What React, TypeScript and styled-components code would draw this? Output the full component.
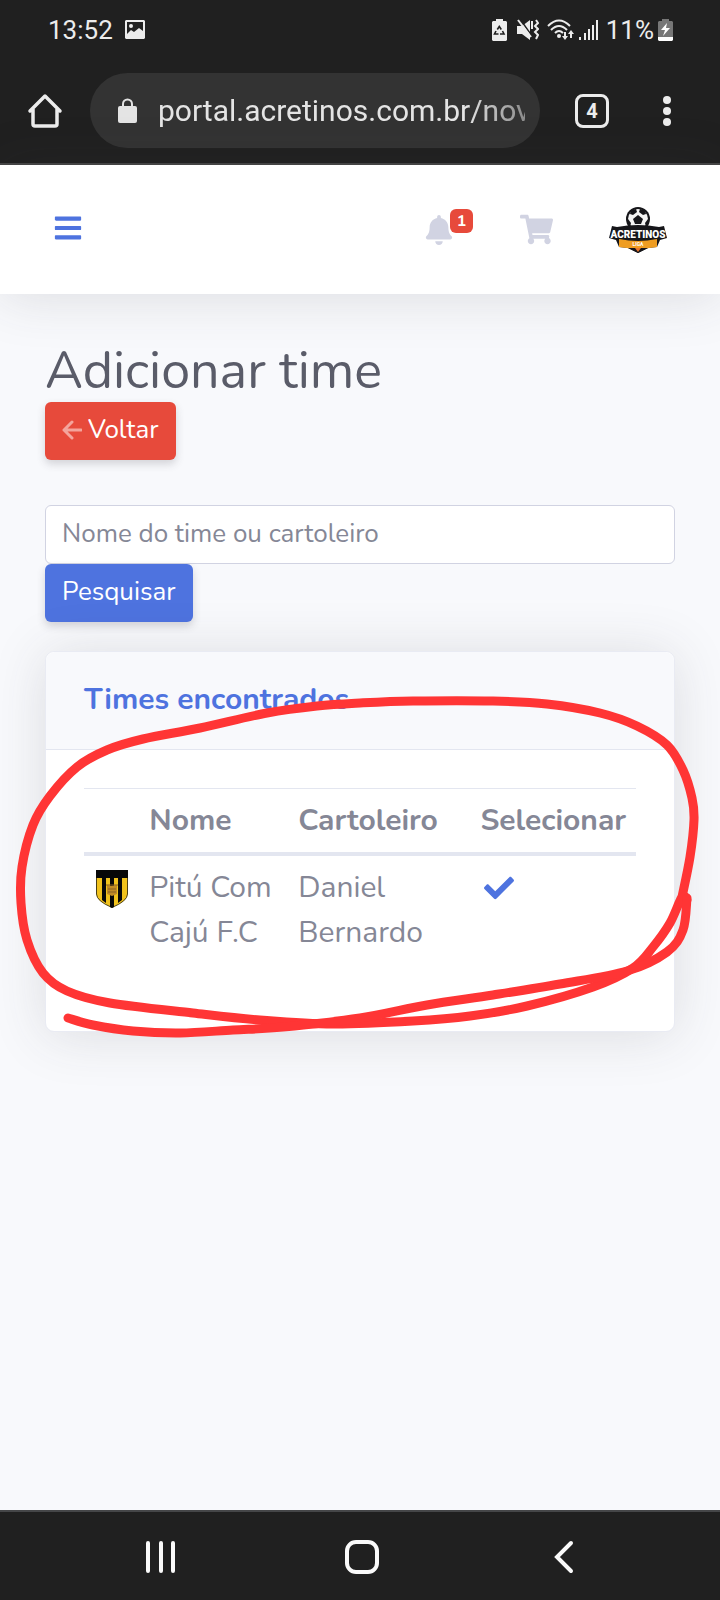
import React from "react";
import styled, { createGlobalStyle } from "styled-components";
import { FaBars, FaBell, FaCheck, FaShoppingCart } from "react-icons/fa";

const GlobalStyle = createGlobalStyle`
  *, *::before, *::after { box-sizing: border-box; }
  body { margin: 0; background: #f8f9fc; }
  button, input { font: inherit; }
  button { cursor: pointer; }
`;

const Screen = styled.div`
  display: flex;
  flex-direction: column;
  min-height: 100vh;
  font-family: "Nunito", "Open Sans", sans-serif;
  color: #858796;
  background: #f8f9fc;
`;

const BrowserChrome = styled.header`
  background: #202020;
  color: #ececec;
  border-bottom: 2px solid #454545;
  font-family: Roboto, sans-serif;
`;

const StatusBar = styled.div`
  display: flex;
  align-items: center;
  justify-content: space-between;
  height: 60px;
  padding: 0 47px 0 48px;
  font-size: 26px;
`;

const StatusGroup = styled.div<{ $gap: number }>`
  display: flex;
  align-items: center;
  gap: ${(p) => p.$gap}px;
`;

const AddressRow = styled.div`
  display: flex;
  align-items: center;
  height: 103px;
  padding: 0 18px 2px 25px;
`;

const ChromeButton = styled.button<{ $width: number }>`
  display: flex;
  align-items: center;
  justify-content: center;
  width: ${(p) => p.$width}px;
  height: 48px;
  padding: 0;
  border: 0;
  background: none;
  color: inherit;
`;

const AddressPill = styled.label`
  display: flex;
  align-items: center;
  flex: 1;
  min-width: 0;
  height: 75px;
  margin: 0 12px 0 25px;
  padding: 0 15px 0 28px;
  gap: 21px;
  border-radius: 38px;
  background: #333333;
`;

const AddressInput = styled.input`
  flex: 1;
  min-width: 0;
  height: 44px;
  padding: 0;
  border: 0;
  outline: 0;
  background: none;
  color: #e4e4e4;
  font-size: 30px;
  mask-image: linear-gradient(to right, #000 84%, rgba(0, 0, 0, 0.5));
`;

const Topbar = styled.nav`
  display: flex;
  align-items: center;
  height: 129px;
  padding: 0 53px 4px;
  background: #fff;
  box-shadow: 0 3px 54px rgba(58, 59, 69, 0.15);
`;

const IconButton = styled.button<{ $tone: string; $after?: number }>`
  display: flex;
  position: relative;
  margin-right: ${(p) => p.$after ?? 0}px;
  padding: 0;
  border: 0;
  background: none;
  color: ${(p) => p.$tone};
`;

const TopbarActions = styled.div`
  display: flex;
  align-items: center;
  margin-left: auto;
  padding-top: 4px;
`;

const Counter = styled.span`
  position: absolute;
  top: -6px;
  left: 26px;
  width: 23px;
  border-radius: 6px;
  background: #e74a3b;
  color: #fff;
  font-size: 16px;
  font-weight: 700;
  line-height: 24px;
  text-align: center;
`;

const Content = styled.main`
  display: flex;
  flex-direction: column;
  align-items: flex-start;
  flex: 1;
  padding: 45px 45px 0;
`;

const Title = styled.h1`
  margin: 0;
  color: #5a5c69;
  font-size: 52px;
  font-weight: 400;
  line-height: 63px;
`;

const ActionButton = styled.button<{ $color: string }>`
  display: flex;
  align-items: center;
  gap: 6px;
  height: 58px;
  padding: 0 17px 2px;
  border: 0;
  border-radius: 6px;
  background: ${(p) => p.$color};
  color: #fff;
  font-size: 26px;
  line-height: 38px;
  box-shadow: 0 4px 8px rgba(58, 59, 69, 0.2);
`;

const SearchForm = styled.form`
  display: flex;
  flex-direction: column;
  align-items: flex-start;
  width: 100%;
  margin: 45px 0 29px;
`;

const SearchInput = styled.input`
  width: 100%;
  height: 59px;
  padding: 0 16px 2px;
  border: 1px solid #d1d3e2;
  border-radius: 6px;
  background: #fff;
  color: #6e707e;
  font-size: 26px;
  &::placeholder { color: #858796; opacity: 1; }
`;

const Card = styled.section`
  position: relative;
  width: 100%;
  border: 1px solid #e9ebf3;
  border-radius: 9px;
  background: #fff;
  box-shadow: 0 3px 54px rgba(58, 59, 69, 0.15);
`;

const CardHeading = styled.h2`
  margin: 0;
  padding: 25px 38px 27px;
  border-bottom: 1px solid #e3e6f0;
  border-radius: 9px 9px 0 0;
  background: #f8f9fc;
  color: #4e73df;
  font-size: 30px;
  font-weight: 700;
  line-height: 45px;
`;

const CardBody = styled.div`
  padding: 38px 38px 67px;
`;

const TeamTable = styled.table`
  width: 100%;
  border-collapse: collapse;
  table-layout: fixed;
  font-size: 30px;
  line-height: 45px;
  text-align: left;
`;

const HeadCell = styled.th<{ $share: number }>`
  width: ${(p) => p.$share}%;
  padding: 9px 10px;
  border-top: 1px solid #e3e6f0;
  border-bottom: 4px solid #e3e6f0;
  font-weight: 700;
`;

const Cell = styled.td`
  padding: 9px 10px;
  vertical-align: top;
`;

const SelectButton = styled.button`
  display: flex;
  align-items: center;
  height: 45px;
  padding: 0 4px;
  border: 0;
  background: none;
  color: #4e73df;
`;

const Crest = styled.svg`
  display: block;
  margin: 5px auto 0;
`;

const Scribble = styled.svg`
  position: absolute;
  inset: 0;
  width: 100%;
  height: 100%;
  overflow: visible;
  pointer-events: none;
`;

const SystemNav = styled.footer`
  display: flex;
  align-items: center;
  justify-content: space-around;
  height: 90px;
  padding: 2px 55px 0 60px;
  border-top: 2px solid #454648;
  background: #202020;
  color: #fafafa;
`;

type Point = [number, number];

/* Smooth curve through a list of points. */
function curve(points: Point[]): string {
  let d = `M${points[0][0]} ${points[0][1]}`;
  for (let i = 0; i < points.length - 1; i++) {
    const a = points[Math.max(i - 1, 0)];
    const b = points[i];
    const c = points[i + 1];
    const e = points[Math.min(i + 2, points.length - 1)];
    d += `C${b[0] + (c[0] - a[0]) / 6} ${b[1] + (c[1] - a[1]) / 6} ${c[0] - (e[0] - b[0]) / 6} ${c[1] - (e[1] - b[1]) / 6} ${c[0]} ${c[1]}`;
  }
  return d;
}

const scribblePoints: Point[] = [
  [687, 898], [683, 930], [667, 952], [627, 971], [560, 984], [493, 995], [427, 1005], [360, 1018],
  [283, 1027], [233, 1030], [180, 1033], [133, 1031], [93, 1025], [68, 1018],
];

const loopPoints: Point[] = [
  [687, 900], [682, 897], [670, 923], [653, 947], [633, 968], [593, 987], [527, 1006], [470, 1016],
  [413, 1021], [333, 1024], [260, 1020], [193, 1013], [110, 1003], [67, 991], [43, 973], [27, 940],
  [21, 903], [22, 867], [33, 825], [50, 796], [77, 767], [107, 750], [143, 739], [200, 728], [267, 713],
  [317, 706], [360, 703], [413, 701], [493, 701], [547, 704], [600, 713], [637, 726], [667, 745],
  [683, 770], [692, 798], [694, 820], [690, 857], [682, 897],
];

const PictureIcon = () => (
  <svg width="20" height="20" viewBox="0 0 20 20" aria-hidden="true">
    <path fill="currentColor" fillRule="evenodd" d="M1 0h18l1 1v17l-1 1H1l-1-1V1zM2 2v12l4-4 3 2 5-4 4 3V2zM4 6a2 2 0 1 1 4 0a2 2 0 1 1-4 0" />
  </svg>
);

const SaverIcon = () => (
  <svg width="15" height="22" viewBox="0 0 15 22" aria-hidden="true">
    <path fill="currentColor" d="M4 0h7v2h3l1 1v18l-1 1H1l-1-1V3l1-1h3z" />
    <path d="M5.300 10.500l2-3 2 3M10.500 12l1.500 3h-4M6.500 15h-4l1.500-3" fill="none" stroke="#202020" strokeWidth="1.600" />
  </svg>
);

const MuteIcon = () => (
  <svg width="22" height="22" viewBox="0 0 22 22" aria-hidden="true">
    <path fill="currentColor" d="M0 7h5l8-6v20l-8-6H0z" />
    <path d="M3 0l12 17" stroke="#202020" strokeWidth="1.500" />
    <path d="M1 1l13 17" stroke="currentColor" strokeWidth="2" />
    <path d="M15 2v8M19 1l2 3-3 3 3 3-3 3 3 3-2 4" fill="none" stroke="currentColor" strokeWidth="2" />
  </svg>
);

const WifiIcon = () => (
  <svg width="27" height="22" viewBox="0 0 27 22" aria-hidden="true">
    <g fill="none" stroke="currentColor" strokeWidth="2">
      <path d="M1 7q11-11 22 0M4 11q8-8 16 0M8 14q4-4 8 0" />
      <path d="M18 13v6M24 19v-6" />
    </g>
    <circle cx="12" cy="17" r="2" fill="currentColor" />
    <path fill="currentColor" d="M15 17h6l-3 4zM21 15h6l-3-4z" />
  </svg>
);

const SignalIcon = () => (
  <svg width="19" height="20" viewBox="0 0 19 20" aria-hidden="true">
    <path d="M1 17v3M6 13v7M10 9v11M14 5v15M18 0v20" stroke="currentColor" strokeWidth="2" />
  </svg>
);

const BatteryIcon = () => (
  <svg width="15" height="22" viewBox="0 0 15 22" aria-hidden="true">
    <path fill="#777" d="M4 0h7v2h3l1 1v18H0V3l1-1h3z" />
    <path fill="#fff" d="M0 18h15v3l-1 1H1l-1-1zM9 4l-6 7h4l-2 6 7-8H8z" />
  </svg>
);

const HomeIcon = () => (
  <svg width="36" height="36" viewBox="0 0 36 36" fill="none" stroke="currentColor" strokeWidth="3.500" strokeLinecap="round" strokeLinejoin="round" aria-hidden="true">
    <path d="M3 18L18 3l15 15M6 16v15q0 2 2 2h20q2 0 2-2V16" />
  </svg>
);

const LockIcon = () => (
  <svg width="19" height="26" viewBox="0 0 19 26" aria-hidden="true">
    <path d="M5 10V6a4.500 4.500 0 0 1 9 0v4" fill="none" stroke="#e4e4e4" strokeWidth="2" />
    <rect y="8" width="19" height="17" rx="2" fill="#e4e4e4" />
  </svg>
);

const TabsFrame = styled.span`
  display: flex;
  align-items: center;
  justify-content: center;
  width: 34px;
  height: 34px;
  border: 3px solid currentColor;
  border-radius: 8px;
  font-size: 20px;
  font-weight: 700;
`;

const MoreIcon = () => (
  <svg width="10" height="32" viewBox="0 0 10 32" fill="currentColor" aria-hidden="true">
    <circle cx="5" cy="5" r="4" /><circle cx="5" cy="16" r="4" /><circle cx="5" cy="27" r="4" />
  </svg>
);

const BackArrow = () => (
  <svg width="20" height="20" viewBox="0 0 20 20" fill="none" stroke="#f4a49c" strokeWidth="3" strokeLinecap="round" strokeLinejoin="round" aria-hidden="true">
    <path d="M10 2l-8 8 8 8M2 10h17" />
  </svg>
);

const ClubLogo = () => (
  <svg width="58" height="46" viewBox="0 0 58 46" role="img" aria-label="Acretinos">
    <circle cx="29" cy="12" r="12" fill="#16161a" />
    <circle cx="29" cy="12" r="10" fill="#f4f4f4" />
    <path fill="#16161a" d="M29 8l5 4-2 5h-6l-2-5zM22 3l5-1 1 3-4 3-3-1zM36 3l-5-1-1 3 4 3 3-1zM19 12l3 4-1 4-2-2zM39 12l-3 4 1 4 2-2z" />
    <path fill="#16161a" d="M3 19l5 1q21-4 42 0l5-1 3 12-7 2-3 7-9 1-10 5-10-5-9-1-3-7-7-2z" />
    <path fill="#ef9d22" d="M10 32q19 4 38 0v8q-19 3-38 0z" />
    <path fill="#16161a" d="M19 41h20l-10 5z" />
    <path fill="#e8762c" d="M26 41h6l-3 4z" />
    <text x="29" y="31" textAnchor="middle" fill="#fff" fontFamily="Roboto, sans-serif" fontWeight="900" fontSize="10">ACRETINOS</text>
    <text x="29" y="39" textAnchor="middle" fill="#fff" fontFamily="Roboto, sans-serif" fontWeight="700" fontSize="5">LIGA</text>
  </svg>
);

const TeamCrest = () => (
  <Crest width="32" height="38" viewBox="0 0 32 38" role="img" aria-label="Escudo do Pitú Com Cajú F.C">
    <path fill="#f1c21d" stroke="#4b4014" d="M0.500 7h31v17q0 7-15.500 13.500Q0.500 31 0.500 24z" />
    <path fill="#080808" d="M0 0h32v8H0zM6 7h4v26l-4-3zM14 7h4v30l-2 1-2-1zM22 7h4v23l-4 3z" />
    <path fill="#c08a26" d="M11 15l4 1 6-1v9l-5 2-5-2z" />
    <path d="M10 15h12M12 19h8M12 22h8" stroke="#876124" />
  </Crest>
);

export default function App() {
  return (
    <Screen>
      <GlobalStyle />
      <BrowserChrome>
        <StatusBar>
          <StatusGroup $gap={12}>
            <span>13:52</span>
            <PictureIcon />
          </StatusGroup>
          <StatusGroup $gap={8}>
            <StatusGroup $gap={10}>
              <SaverIcon />
              <MuteIcon />
            </StatusGroup>
            <StatusGroup $gap={5}>
              <WifiIcon />
              <SignalIcon />
            </StatusGroup>
            <StatusGroup $gap={4}>
              <span>11%</span>
              <BatteryIcon />
            </StatusGroup>
          </StatusGroup>
        </StatusBar>
        <AddressRow>
          <ChromeButton $width={40} aria-label="Página inicial"><HomeIcon /></ChromeButton>
          <AddressPill>
            <LockIcon />
            <AddressInput aria-label="Endereço" readOnly value="portal.acretinos.com.br/novo" />
          </AddressPill>
          <ChromeButton $width={80} aria-label="Abas abertas: 4"><TabsFrame>4</TabsFrame></ChromeButton>
          <ChromeButton $width={70} aria-label="Mais opções"><MoreIcon /></ChromeButton>
        </AddressRow>
      </BrowserChrome>

      <Topbar>
        <IconButton $tone="#4e73df" aria-label="Abrir menu"><FaBars size={30} /></IconButton>
        <TopbarActions>
          <IconButton $tone="#d1d3e2" $after={66} aria-label="Notificações">
            <FaBell size={30} />
            <Counter>1</Counter>
          </IconButton>
          <IconButton $tone="#d1d3e2" $after={56} aria-label="Carrinho"><FaShoppingCart size={33} /></IconButton>
          <ClubLogo />
        </TopbarActions>
      </Topbar>

      <Content>
        <Title>Adicionar time</Title>
        <ActionButton $color="#e74a3b" type="button"><BackArrow />Voltar</ActionButton>
        <SearchForm onSubmit={(e: React.FormEvent) => e.preventDefault()}>
          <SearchInput aria-label="Nome do time ou cartoleiro" placeholder="Nome do time ou cartoleiro" />
          <ActionButton $color="#4e73df" type="submit">Pesquisar</ActionButton>
        </SearchForm>
        <Card>
          <CardHeading>Times encontrados</CardHeading>
          <CardBody>
            <TeamTable>
              <thead>
                <tr>
                  <HeadCell $share={10} />
                  <HeadCell $share={27}>Nome</HeadCell>
                  <HeadCell $share={33}>Cartoleiro</HeadCell>
                  <HeadCell $share={30}>Selecionar</HeadCell>
                </tr>
              </thead>
              <tbody>
                <tr>
                  <Cell><TeamCrest /></Cell>
                  <Cell>Pitú Com Cajú F.C</Cell>
                  <Cell>Daniel Bernardo</Cell>
                  <Cell><SelectButton aria-label="Selecionar Pitú Com Cajú F.C"><FaCheck size={30} /></SelectButton></Cell>
                </tr>
              </tbody>
            </TeamTable>
          </CardBody>
          <Scribble viewBox="46 652 628 379" preserveAspectRatio="none" fill="none" stroke="#ff3535" strokeWidth="9" strokeLinecap="round" strokeLinejoin="round" aria-hidden="true">
            <path d={curve(loopPoints)} />
            <path d={curve(scribblePoints)} />
          </Scribble>
        </Card>
      </Content>

      <SystemNav>
        <ChromeButton $width={60} aria-label="Recentes">
          <svg width="30" height="34" viewBox="0 0 30 34" stroke="currentColor" strokeWidth="4" strokeLinecap="round" aria-hidden="true">
            <path d="M2 3v28M15 3v28M27 3v28" />
          </svg>
        </ChromeButton>
        <ChromeButton $width={60} aria-label="Início">
          <svg width="34" height="34" viewBox="0 0 34 34" fill="none" stroke="currentColor" strokeWidth="4" aria-hidden="true">
            <rect x="2" y="2" width="30" height="30" rx="9" />
          </svg>
        </ChromeButton>
        <ChromeButton $width={60} aria-label="Voltar">
          <svg width="20" height="34" viewBox="0 0 20 34" fill="none" stroke="currentColor" strokeWidth="4" strokeLinecap="round" aria-hidden="true">
            <path d="M17 3L3 17l14 14" />
          </svg>
        </ChromeButton>
      </SystemNav>
    </Screen>
  );
}
